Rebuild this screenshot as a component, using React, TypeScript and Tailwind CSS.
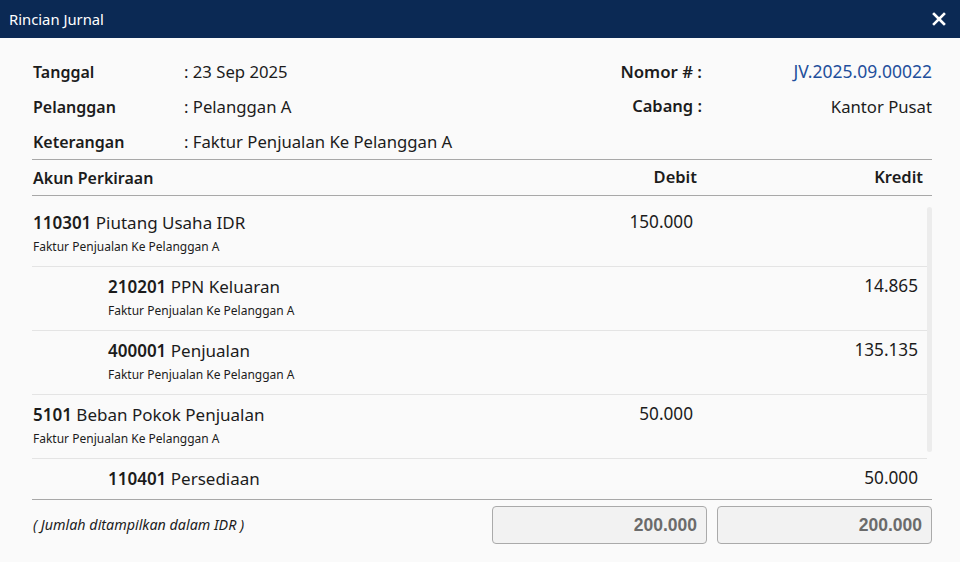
import React from "react";

const rows = [
  { code: "110301", name: "Piutang Usaha IDR", desc: "Faktur Penjualan Ke Pelanggan A", debit: "150.000", kredit: "", indent: false },
  { code: "210201", name: "PPN Keluaran", desc: "Faktur Penjualan Ke Pelanggan A", debit: "", kredit: "14.865", indent: true },
  { code: "400001", name: "Penjualan", desc: "Faktur Penjualan Ke Pelanggan A", debit: "", kredit: "135.135", indent: true },
  { code: "5101", name: "Beban Pokok Penjualan", desc: "Faktur Penjualan Ke Pelanggan A", debit: "50.000", kredit: "", indent: false },
  { code: "110401", name: "Persediaan", desc: "", debit: "", kredit: "50.000", indent: true },
];

export default function App() {
  return (
    <div
      className="w-[960px] h-[562px] bg-[#fafafa] text-[#1c1c1c] overflow-hidden flex flex-col"
      style={{ fontFamily: '"Noto Sans", "Open Sans", sans-serif' }}
    >
      <div className="h-[38px] bg-[#0b2954] flex items-center justify-between pl-[9px] pr-[14px] shrink-0">
        <span className="text-white text-[14.8px]">Rincian Jurnal</span>
        <svg width="14" height="14" viewBox="0 0 14 14">
          <path d="M2 2 L12 12 M12 2 L2 12" stroke="white" strokeWidth="2.6" strokeLinecap="square" />
        </svg>
      </div>

      <div className="flex-1 flex flex-col pl-[32px] pr-[28px]">
        <div className="pt-[16px] flex border-b border-[#a8a8a8]">
          <div className="flex-1 flex flex-col text-[16.7px]">
            <div className="h-[35px] flex items-center">
              <span className="w-[152px] pl-px font-semibold text-[16px]">Tanggal</span>
              <span>: 23 Sep 2025</span>
            </div>
            <div className="h-[35px] flex items-center">
              <span className="w-[152px] pl-px font-semibold text-[16px]">Pelanggan</span>
              <span>: Pelanggan A</span>
            </div>
            <div className="h-[35px] flex items-center">
              <span className="w-[152px] pl-px font-semibold text-[16px]">Keterangan</span>
              <span>: Faktur Penjualan Ke Pelanggan A</span>
            </div>
          </div>
          <div className="w-[330px] flex flex-col text-[16.7px]">
            <div className="h-[35px] flex items-center">
              <span className="w-[100px] text-right font-semibold text-[16.8px]">Nomor # :</span>
              <span className="flex-1 text-right text-[#1f4f9c] text-[17.5px]">JV.2025.09.00022</span>
            </div>
            <div className="h-[35px] flex items-center">
              <span className="w-[100px] text-right font-semibold text-[16.5px]">Cabang :</span>
              <span className="flex-1 text-right">Kantor Pusat</span>
            </div>
          </div>
        </div>

        <div className="h-[36px] flex items-center border-b border-[#a8a8a8] text-[16.5px] font-semibold pr-[9px]">
          <span className="flex-1 pl-px text-[16px]">Akun Perkiraan</span>
          <span className="w-[160px] text-right">Debit</span>
          <span className="w-[226px] text-right">Kredit</span>
        </div>

        <div className="relative h-[304px] border-b border-[#a8a8a8] overflow-hidden">
          <div className="pt-[7px] pr-[5px] flex flex-col">
            {rows.map((r, i) => (
              <div key={i} className={"h-[64px] flex pr-[9px] " + (i < rows.length - 1 ? "border-b border-[#e4e4e4]" : "")}>
                <div className={"flex-1 flex flex-col pt-[7px] " + (r.indent ? "pl-[76px]" : "pl-px")}>
                  <div className="h-[24px] flex items-center text-[17px] leading-none">
                    <span className="font-semibold">{r.code}</span>
                    <span>&nbsp;{r.name}</span>
                  </div>
                  {r.desc && <div className="mt-[4px] h-[18px] flex items-center text-[12px]">{r.desc}</div>}
                </div>
                <div className="w-[160px] pt-[7px] text-right text-[17.2px] h-[31px] leading-[24px]">{r.debit}</div>
                <div className="w-[225px] pt-[7px] text-right text-[17.2px] h-[31px] leading-[24px]">{r.kredit}</div>
              </div>
            ))}
          </div>
          <div className="absolute right-0 top-[11px] w-[5px] h-[245px] rounded-full bg-[#ececec]" />
        </div>

        <div className="flex items-center pt-[6px]">
          <span className="flex-1 italic text-[14.3px] pl-px">( Jumlah ditampilkan dalam IDR )</span>
          <div className="w-[215px] h-[38px] rounded-[4px] border border-[#aaaaaa] bg-[#f2f2f2] flex items-center justify-end pr-[9px] text-[17.5px] font-bold text-[#6b6b6b]" style={{ fontFamily: '"Liberation Sans", Arial, sans-serif' }}>200.000</div>
          <div className="w-[215px] h-[38px] ml-[10px] rounded-[4px] border border-[#aaaaaa] bg-[#f2f2f2] flex items-center justify-end pr-[9px] text-[17.5px] font-bold text-[#6b6b6b]" style={{ fontFamily: '"Liberation Sans", Arial, sans-serif' }}>200.000</div>
        </div>
      </div>
    </div>
  );
}
